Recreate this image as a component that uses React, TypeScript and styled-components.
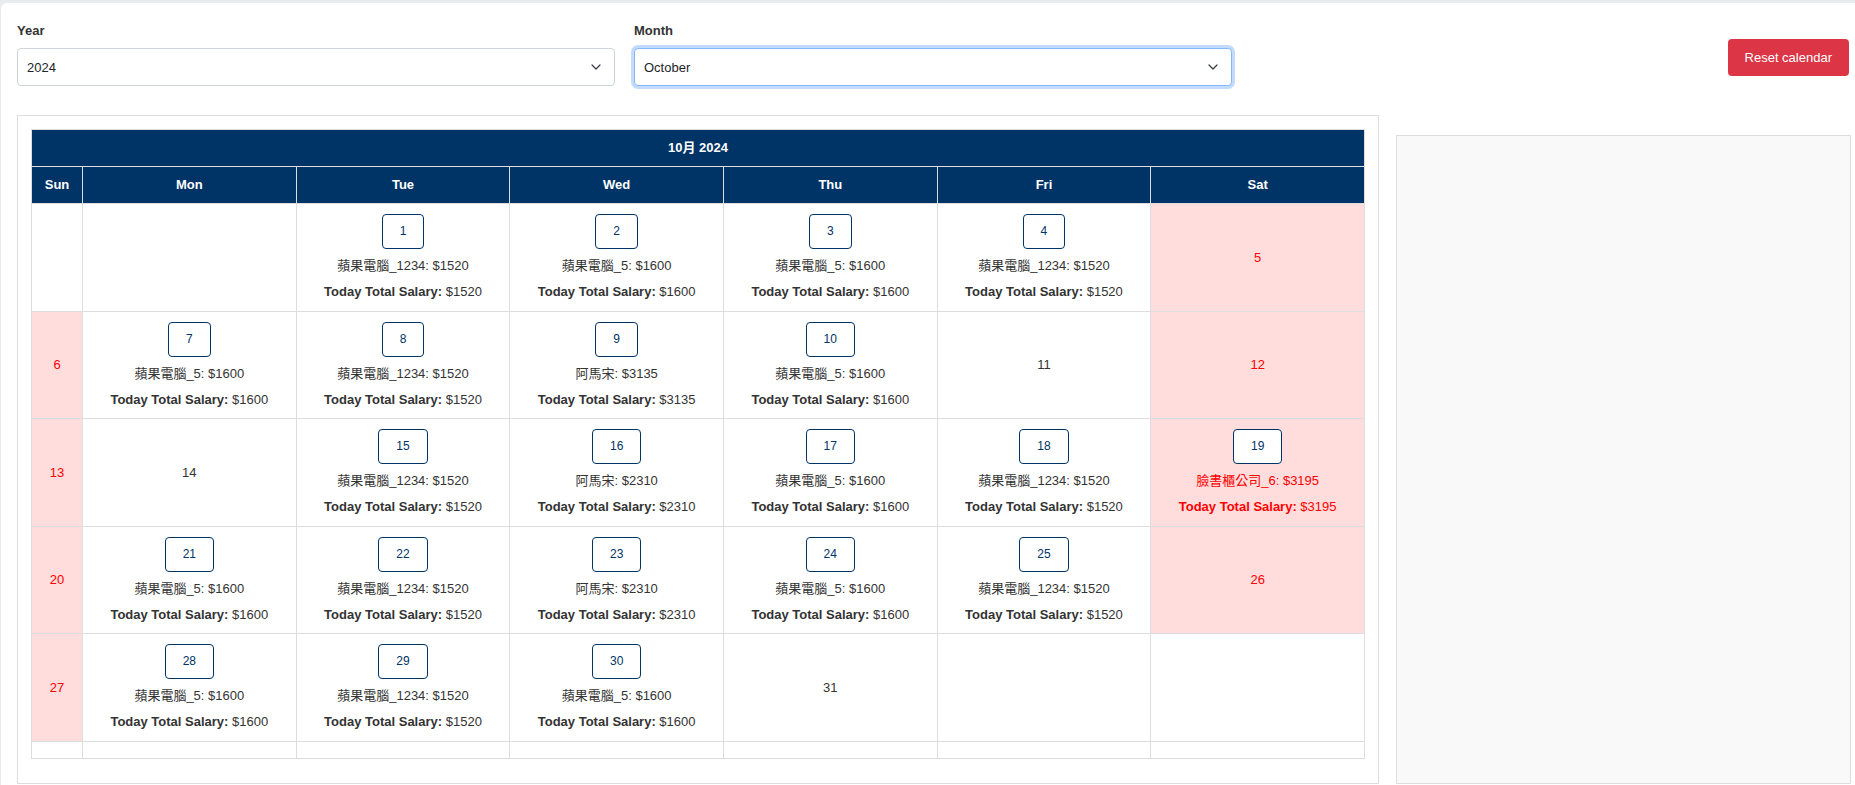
import React from "react";
import styled, { createGlobalStyle } from "styled-components";

const GlobalStyle = createGlobalStyle`
  html, body {
    margin: 0;
    padding: 0;
  }
  body {
    background: #e9ecef;
    font-family: "Liberation Sans", Arial, "Noto Sans CJK TC", sans-serif;
    font-size: 13px;
    color: #333;
    overflow: hidden;
  }
  * { box-sizing: border-box; }
`;

const Page = styled.div`
  margin: 3px 0 0 1px;
  background: #fff;
  border-top-left-radius: 6px;
  min-height: 782px;
  padding: 19px 6px 0 16px;
`;

const Controls = styled.div`
  display: flex;
  align-items: flex-start;
  gap: 19px;
`;

const Field = styled.div`
  width: 598px;
`;

const Label = styled.label`
  display: block;
  font-weight: bold;
  font-size: 13px;
  line-height: 18px;
  color: #333;
  margin-bottom: 8px;
`;

const SelectWrap = styled.div`
  position: relative;
`;

const Select = styled.select<{ $focused?: boolean }>`
  appearance: none;
  -webkit-appearance: none;
  width: 100%;
  height: 38px;
  padding: 0 32px 0 9px;
  font-family: "Liberation Sans", Arial, sans-serif;
  font-size: 13px;
  color: #212529;
  background: #fff;
  border: 1px solid ${(p) => (p.$focused ? "#86b7fe" : "#ced4da")};
  border-radius: 4px;
  box-shadow: ${(p) => (p.$focused ? "0 0 0 3px rgba(13,110,253,.25)" : "none")};
  outline: none;
`;

const Chevron = styled.svg`
  position: absolute;
  right: 14px;
  top: 50%;
  margin-top: -3px;
  width: 10px;
  height: 6px;
  pointer-events: none;
`;

const ResetButton = styled.button`
  margin-left: auto;
  margin-top: 17px;
  height: 37px;
  padding: 0 17px;
  background: #dc3545;
  color: #fff;
  border: none;
  border-radius: 4px;
  font-family: "Liberation Sans", Arial, sans-serif;
  font-size: 13px;
  cursor: pointer;
`;

const Main = styled.div`
  display: grid;
  grid-template-columns: 1362px 455px;
  gap: 17px;
  margin-top: 29px;
  align-items: start;
`;

const CalendarBox = styled.div`
  border: 1px solid #ddd;
  padding: 13px 13px 27px 13px;
  height: 669px;
`;

const SidePanel = styled.div`
  margin-top: 20px;
  height: 649px;
  background: #f9f9f9;
  border: 1px solid #ddd;
`;

const Table = styled.table`
  width: 100%;
  border-collapse: collapse;
  table-layout: fixed;
`;

const HeadCell = styled.th`
  background: #003366;
  color: #fff;
  font-weight: bold;
  font-size: 13px;
  line-height: 16px;
  padding: 10px 4px;
  border: 1px solid #ddd;
  text-align: center;
`;

const DayCell = styled.td<{ $weekend?: boolean }>`
  border: 1px solid #ddd;
  background: ${(p) => (p.$weekend ? "#ffdddd" : "#fff")};
  color: ${(p) => (p.$weekend ? "#ff0000" : "#333")};
  text-align: center;
  vertical-align: middle;
  padding: 10px 6px 9.5px;
  font-size: 13px;
  line-height: 18px;
`;

const FillerCell = styled.td`
  border: 1px solid #ddd;
  padding: 8px 0 8px;
  height: 16px;
`;

const DayContent = styled.div`
  display: flex;
  flex-direction: column;
  align-items: center;
`;

const DateBox = styled.span`
  display: inline-block;
  padding: 10px 17px;
  border: 1px solid #003366;
  border-radius: 4px;
  background: #fff;
  color: #003366;
  font-size: 12px;
  line-height: 13px;
  margin-bottom: 8px;
`;

const Entry = styled.p<{ $last?: boolean }>`
  margin: 0 0 ${(p) => (p.$last ? 0 : 8)}px;
  line-height: 18px;
  white-space: nowrap;
`;

const Strong = styled.strong`
  font-weight: bold;
`;

type Day = {
  day?: number;
  entry?: string;
  amount?: number;
  weekend?: boolean;
};

const A1234 = "蘋果電腦_1234";
const A5 = "蘋果電腦_5";
const AMZ = "阿馬宋";

const weeks: Day[][] = [
  [
    {},
    {},
    { day: 1, entry: A1234, amount: 1520 },
    { day: 2, entry: A5, amount: 1600 },
    { day: 3, entry: A5, amount: 1600 },
    { day: 4, entry: A1234, amount: 1520 },
    { day: 5, weekend: true },
  ],
  [
    { day: 6, weekend: true },
    { day: 7, entry: A5, amount: 1600 },
    { day: 8, entry: A1234, amount: 1520 },
    { day: 9, entry: AMZ, amount: 3135 },
    { day: 10, entry: A5, amount: 1600 },
    { day: 11 },
    { day: 12, weekend: true },
  ],
  [
    { day: 13, weekend: true },
    { day: 14 },
    { day: 15, entry: A1234, amount: 1520 },
    { day: 16, entry: AMZ, amount: 2310 },
    { day: 17, entry: A5, amount: 1600 },
    { day: 18, entry: A1234, amount: 1520 },
    { day: 19, entry: "臉書櫃公司_6", amount: 3195, weekend: true },
  ],
  [
    { day: 20, weekend: true },
    { day: 21, entry: A5, amount: 1600 },
    { day: 22, entry: A1234, amount: 1520 },
    { day: 23, entry: AMZ, amount: 2310 },
    { day: 24, entry: A5, amount: 1600 },
    { day: 25, entry: A1234, amount: 1520 },
    { day: 26, weekend: true },
  ],
  [
    { day: 27, weekend: true },
    { day: 28, entry: A5, amount: 1600 },
    { day: 29, entry: A1234, amount: 1520 },
    { day: 30, entry: A5, amount: 1600 },
    { day: 31 },
    {},
    {},
  ],
];

const dayNames = ["Sun", "Mon", "Tue", "Wed", "Thu", "Fri", "Sat"];

const ChevronIcon = () => (
  <Chevron viewBox="0 0 10 6" fill="none">
    <path d="M1 1l4 4 4-4" stroke="#343a40" strokeWidth="1.2" strokeLinecap="round" strokeLinejoin="round" />
  </Chevron>
);

const DayView: React.FC<{ d: Day }> = ({ d }) => {
  if (d.day === undefined) return <DayCell />;
  if (!d.entry) return <DayCell $weekend={d.weekend}>{d.day}</DayCell>;
  return (
    <DayCell $weekend={d.weekend}>
      <DayContent>
        <DateBox>{d.day}</DateBox>
        <Entry>
          {d.entry}: ${d.amount}
        </Entry>
        <Entry $last>
          <Strong>Today Total Salary:</Strong> ${d.amount}
        </Entry>
      </DayContent>
    </DayCell>
  );
};

export default function App() {
  return (
    <>
      <GlobalStyle />
      <Page>
        <Controls>
          <Field>
            <Label>Year</Label>
            <SelectWrap>
              <Select defaultValue="2024">
                <option value="2023">2023</option>
                <option value="2024">2024</option>
                <option value="2025">2025</option>
              </Select>
              <ChevronIcon />
            </SelectWrap>
          </Field>
          <Field>
            <Label>Month</Label>
            <SelectWrap>
              <Select $focused defaultValue="October">
                {["January","February","March","April","May","June","July","August","September","October","November","December"].map((m) => (
                  <option key={m} value={m}>{m}</option>
                ))}
              </Select>
              <ChevronIcon />
            </SelectWrap>
          </Field>
          <ResetButton>Reset calendar</ResetButton>
        </Controls>
        <Main>
          <CalendarBox>
            <Table>
              <colgroup>
                <col style={{ width: 51 }} />
                <col />
                <col />
                <col />
                <col />
                <col />
                <col />
              </colgroup>
              <thead>
                <tr>
                  <HeadCell colSpan={7}>10月 2024</HeadCell>
                </tr>
                <tr>
                  {dayNames.map((n) => (
                    <HeadCell key={n}>{n}</HeadCell>
                  ))}
                </tr>
              </thead>
              <tbody>
                {weeks.map((w, i) => (
                  <tr key={i}>
                    {w.map((d, j) => (
                      <DayView key={j} d={d} />
                    ))}
                  </tr>
                ))}
                <tr>
                  {dayNames.map((n) => (
                    <FillerCell key={n} />
                  ))}
                </tr>
              </tbody>
            </Table>
          </CalendarBox>
          <SidePanel />
        </Main>
      </Page>
    </>
  );
}
